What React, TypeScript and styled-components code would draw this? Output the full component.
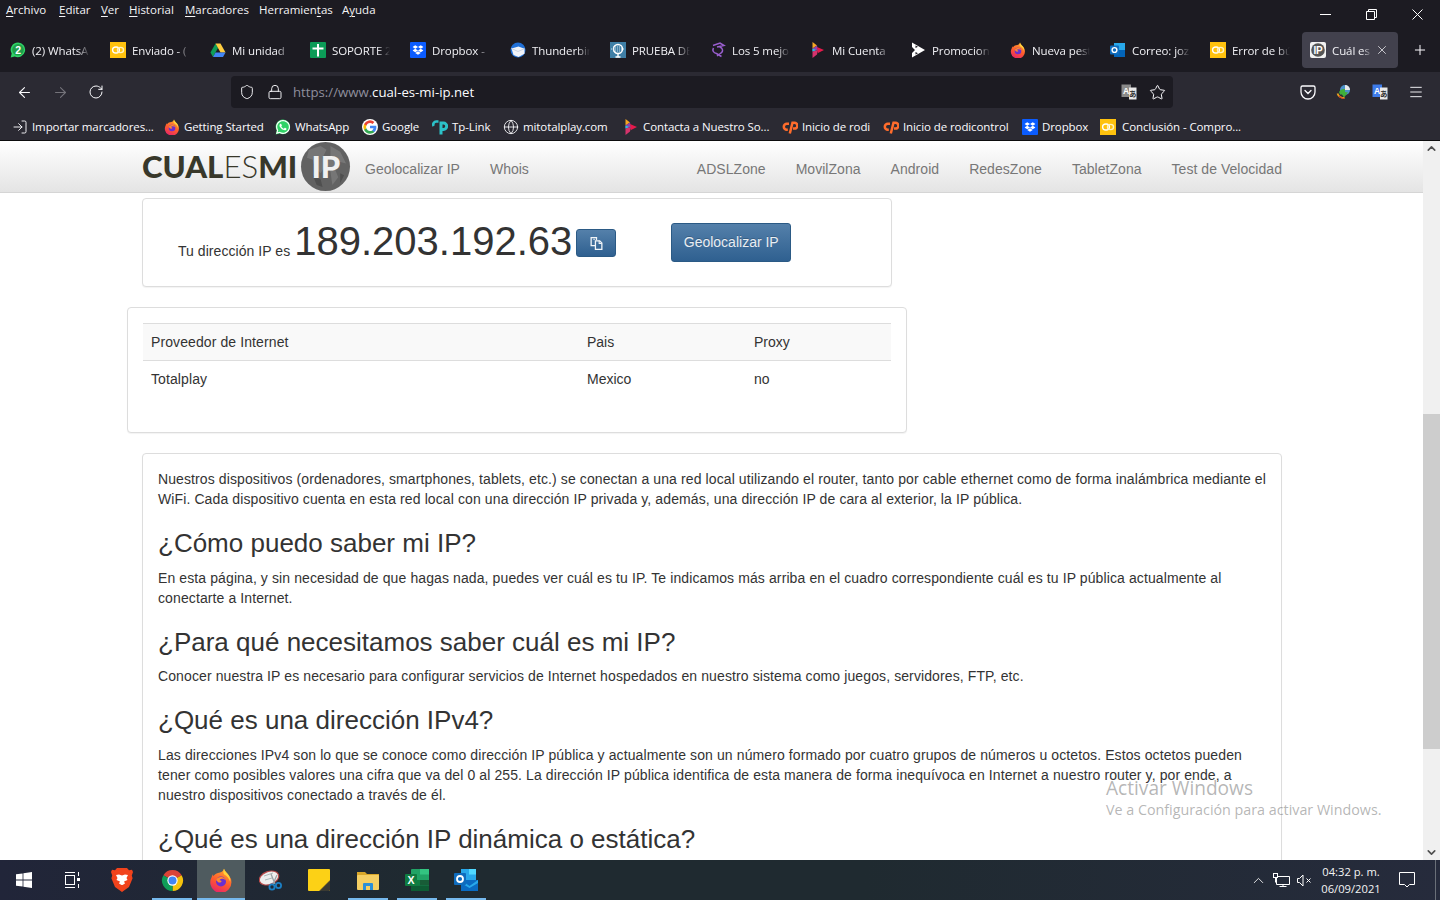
import React from "react";
import styled, { createGlobalStyle } from "styled-components";
import { ArrowLeft, ArrowRight, RotateCw, Shield, Lock, Star, Menu as MenuIcon, Plus, X, Globe, LogIn, ChevronUp, ChevronDown } from "lucide-react";
import { FaDropbox, FaWhatsapp } from "react-icons/fa";

const Global = createGlobalStyle`
  html, body { margin: 0; padding: 0; background: #fff; overflow: hidden; }
  * { box-sizing: border-box; }
`;

const UI = `"Open Sans", "Noto Sans", sans-serif`;
const PAGE = `"Liberation Sans", Arial, sans-serif`;

const Screen = styled.div`
  position: relative; width: 1440px; height: 900px; overflow: hidden;
  display: flex; flex-direction: column; font-family: ${PAGE};
`;
const TitleArea = styled.header`
  height: 72px; background: #1c1b22; color: #fbfbfe; font-family: ${UI}; flex: none;
  display: flex; flex-direction: column;
`;
const TopRow = styled.div`
  height: 32px; display: flex; justify-content: space-between; align-items: flex-start;
`;
const MenuBar = styled.nav`
  display: flex; gap: 12px; padding: 1px 0 0 6px; font-size: 11.5px; line-height: 18px; color: #f4f4f6;
`;
const MenuItem = styled.span<{ $w: number }>`
  width: ${(p) => p.$w}px; white-space: nowrap; u { text-decoration-thickness: 1px; text-underline-offset: 2px; }
`;
const WinControls = styled.div`
  display: flex; color: #fff;
`;
const WinBtn = styled.div`
  width: 46px; height: 29px; display: flex; align-items: center; justify-content: center;
`;
const TabStrip = styled.div`
  height: 36px; display: flex; align-items: stretch;
`;
const Tab = styled.div<{ $active?: boolean }>`
  position: relative; width: 100px; display: flex; align-items: center; gap: 6px; padding-left: 10px;
  font-size: 11.5px; letter-spacing: -0.1px; color: #f0f0f4;
  &::before {
    content: ""; display: ${(p) => (p.$active ? "block" : "none")}; position: absolute; inset: 0 2px; border-radius: 4px; background: #42414d;
  }
  & > * { position: relative; }
`;
const TabLabel = styled.span<{ $active?: boolean }>`
  width: ${(p) => (p.$active ? 40 : 58)}px; overflow: hidden; white-space: nowrap;
  -webkit-mask-image: linear-gradient(90deg, #000 78%, transparent 100%);
  mask-image: linear-gradient(90deg, #000 78%, transparent 100%);
`;
const TabClose = styled.span`
  position: absolute; left: 75px; top: 11px; display: flex;
`;
const NewTab = styled.div`
  width: 36px; display: flex; align-items: center; justify-content: center; margin-left: 2px;
`;
const NavBar = styled.div`
  height: 40px; flex: none; background: #2b2a33; display: flex; align-items: center; color: #fbfbfe; font-family: ${UI};
`;
const NavBtn = styled.div<{ $off?: boolean }>`
  width: 36px; display: flex; justify-content: center; color: ${(p) => (p.$off ? "#74737a" : "#fbfbfe")};
`;
const NavBtns = styled.div`
  display: flex; padding-left: 6px; width: 231px;
`;
const UrlBar = styled.div`
  width: 942px; height: 32px; background: #1c1b22; border-radius: 4px; display: flex; align-items: center; padding-left: 2px; color: #fbfbfe;
`;
const UrlIcon = styled.span`
  width: 28px; display: flex; justify-content: center; flex: none;
`;
const UrlText = styled.span`
  flex: 1; font-size: 13.2px; margin-left: 4px; color: #fbfbfe; white-space: nowrap;
  em { font-style: normal; color: #8f8f9d; }
`;
const UrlTail = styled.div`
  display: flex; padding-right: 2px;
`;
const Extensions = styled.div`
  display: flex; margin-left: 117px;
`;
const BookmarkBar = styled.div`
  height: 29px; flex: none; background: #2b2a33; border-bottom: 1px solid #0c0c0d; display: flex; align-items: center; gap: 12px;
  padding: 1px 0 0 12px; color: #fbfbfe; font-family: ${UI}; font-size: 11.5px; letter-spacing: -0.1px;
`;
const Bookmark = styled.div<{ $gap?: number }>`
  display: flex; align-items: center; gap: ${(p) => p.$gap ?? 4}px; flex: none;
`;
const BookmarkLabel = styled.span<{ $w: number }>`
  width: ${(p) => p.$w}px; white-space: nowrap;
`;
const Viewport = styled.div`
  flex: 1; display: flex; min-height: 0; overflow: hidden; background: #fff;
`;
const PageCol = styled.main`
  width: 1423px; flex: none; overflow: hidden; color: #333; font-size: 14px; line-height: 20px;
`;
const SiteNav = styled.div`
  height: 52px; padding: 0 141px 0 142px; display: flex; align-items: center;
  background: linear-gradient(#ffffff, #e4e4e4); border-bottom: 1px solid #d5d5d5;
`;
const Logo = styled.div`
  display: flex; align-items: center; width: 223px; flex: none; color: #38382a;
  font-family: "Lato", "Open Sans", sans-serif; font-size: 31.2px; line-height: 1; white-space: nowrap;
  b { font-weight: 900; } span.l { font-weight: 300; }
`;
const LogoBall = styled.div`
  position: relative; width: 49px; height: 49px; border-radius: 50%; margin-left: 4px; flex: none; overflow: hidden;
  background: #626262; display: flex; align-items: center; justify-content: center;
  svg { position: absolute; inset: 0; }
  strong { position: relative; color: #f0f0f0; font-family: "Lato", sans-serif; font-weight: 900; font-size: 31px; letter-spacing: 0; }
`;
const NavLinks = styled.div`
  display: flex; gap: 30px; color: #777; font-size: 14px; padding-top: 4px;
`;
const NavRight = styled(NavLinks)`
  margin-left: auto; letter-spacing: 0.04px;
`;
const Card = styled.section`
  background: #fff; border: 1px solid #ddd; border-radius: 4px; box-shadow: 0 1px 1px rgba(0, 0, 0, 0.05);
`;
const IpCard = styled(Card)`
  width: 750px; height: 89px; margin: 5px 0 20px 142px; display: flex; align-items: flex-start; padding: 24px 0 0 35px;
`;
const IpLabel = styled.span`
  margin-top: 18px; white-space: nowrap; letter-spacing: 0.05px;
`;
const IpValue = styled.span`
  font-size: 40px; line-height: 36px; margin: 0 4px 0 4px; white-space: nowrap;
`;
const BlueBtn = styled.button`
  border: 1px solid #2b5a85; border-radius: 3px; color: #e9eef3; font: 14px/20px ${PAGE};
  background: linear-gradient(#5480aa, #2f6090); padding: 0; display: flex; align-items: center; justify-content: center;
  text-shadow: 0 -1px 0 rgba(0,0,0,.2);
`;
const CopyBtn = styled(BlueBtn)`
  width: 40px; height: 28px; margin-top: 6px;
`;
const GeoBtn = styled(BlueBtn)`
  width: 120px; height: 39px; margin-left: 55px; padding-bottom: 2px;
`;
const TableCard = styled(Card)`
  width: 780px; height: 126px; margin: 0 0 20px 127px; padding: 15px;
`;
const InfoTable = styled.table`
  width: 748px; border-collapse: collapse; table-layout: fixed;
  th, td { padding: 8px; height: 37px; text-align: left; font-weight: 400; }
  th { background: #f9f9f9; border-top: 1px solid #ddd; border-bottom: 1px solid #ddd; }
  th:first-child, td:first-child { letter-spacing: 0.1px; }
`;
const ArticleCard = styled(Card)`
  width: 1140px; height: 700px; margin-left: 142px; padding: 15px;
  p { margin: 0 0 10px; letter-spacing: 0.105px; }
  h3 { margin: 20px 0 10px; font-size: 26px; line-height: 28.6px; font-weight: 400; }
`;
const Scrollbar = styled.aside`
  flex: 1; background: #f0f0f0; position: relative; color: #505050;
`;
const ScrollThumb = styled.div`
  position: absolute; left: 0; right: 0; top: 273px; height: 335px; background: #cdcdcd;
`;
const ScrollArrow = styled.span<{ $bottom?: boolean }>`
  position: absolute; left: 2px; ${(p) => (p.$bottom ? "bottom: 1px;" : "top: 1px;")} display: flex;
`;
const Taskbar = styled.footer`
  height: 40px; flex: none; display: flex; align-items: center; color: #fff; font-family: ${UI};
  background: linear-gradient(90deg, #212539 0%, #1f2a30 30%, #1f2a30 60%, #262b3c 100%);
`;
const TaskSlot = styled.div<{ $w?: number; $active?: boolean; $bar?: number; $ml?: number }>`
  position: relative; width: ${(p) => p.$w ?? 48}px; margin-left: ${(p) => p.$ml ?? 0}px; height: 40px; display: flex; align-items: center; justify-content: center; flex: none;
  background: ${(p) => (p.$active ? "#4f5b5f" : "transparent")};
  &::after {
    content: ""; display: ${(p) => (p.$bar ? "block" : "none")}; position: absolute; bottom: 0; height: 2px; background: #76b9ed;
    left: ${(p) => (p.$active ? 0 : 4)}px; right: ${(p) => (p.$active ? 0 : 4)}px;
  }
`;
const TaskIcons = styled.div`
  display: flex; flex: 1;
`;
const Tray = styled.div`
  display: flex; align-items: center; color: #fff;
`;
const TrayIcon = styled.span<{ $w: number }>`
  width: ${(p) => p.$w}px; display: flex; justify-content: center;
`;
const Clock = styled.div`
  width: 70px; text-align: center; font-size: 11.2px; line-height: 17px; margin: 0 9px 0 0; white-space: nowrap; color: #f4f4f4;
`;
const DesktopEdge = styled.div`
  width: 1px; height: 40px; background: #6a6f78; margin: 0 4px 0 16px;
`;
const Watermark = styled.div`
  position: absolute; left: 1106px; top: 775px; color: rgba(120, 120, 120, 0.55); font-family: ${UI}; pointer-events: none; white-space: nowrap;
  div:first-child { font-size: 19.1px; line-height: 26px; }
  div:last-child { font-size: 14.3px; line-height: 20px; margin-top: -1px; }
`;

type Kind = "wa" | "gold" | "drive" | "sop" | "dbx" | "tb" | "mic" | "mag" | "play" | "playw" | "ff" | "ol" | "ip" | "g" | "tp" | "cp" | "chrome";

const Ffox = ({ s }: { s: number }) => (
  <svg width={s} height={s} viewBox="0 0 24 24">
    <defs>
      <linearGradient id="ffg" x1="0.7" y1="0" x2="0.3" y2="1">
        <stop offset="0" stopColor="#ffa52e" />
        <stop offset="0.55" stopColor="#ff5a2d" />
        <stop offset="1" stopColor="#e6246b" />
      </linearGradient>
    </defs>
    <path d="M15 .8c.6 2.8 3 4 4.7 6.4A10.6 10.6 0 1 1 2.6 9.2c.4-1.3.9-2.2 1.4-2.9l.3 2c1-1.6 2.6-2.9 4.7-3.3C11.8 4.500 14.500 3.500 15 .8z" fill="url(#ffg)" />
    <path d="M15 .8c.6 2.8 3 4 4.700 6.400 1.300 2 1.800 4.200 1.500 6.500-1-3.300-3.200-5.600-6-7.200-1-.7-1.200-3.500-.2-5.700z" fill="#ffd23c" />
    <circle cx="12" cy="13.500" r="5" fill="#6a2fd0" />
    <path d="M7 12c1-2.500 3.500-3.500 6-3 1.800.4 3.500 1.600 4 3.500-1.500-1.500-3.500-2-5-1.500-1 .3-1.500 1-1.300 1.300.8.200 2 .3 1.800 1.200-.3 1.200-2.600 1.500-3.500.5z" fill="#ff8a2b" />
  </svg>
);

const Chrome = ({ s }: { s: number }) => (
  <svg width={s} height={s} viewBox="0 0 24 24">
    <path d="M12 12 21.530 6.500A11 11 0 0 0 2.470 6.500Z" fill="#db4437" />
    <path d="M12 12 12 23A11 11 0 0 0 21.530 6.500Z" fill="#f4c20d" />
    <path d="M12 12 2.470 6.500A11 11 0 0 0 12 23Z" fill="#0f9d58" />
    <circle cx="12" cy="12" r="5.400" fill="#fff" />
    <circle cx="12" cy="12" r="4.200" fill="#4285f4" />
  </svg>
);

const Fav = ({ k, s = 16 }: { k: Kind; s?: number }) => {
  switch (k) {
    case "wa":
      return (
        <svg width={s} height={s} viewBox="0 0 16 16">
          <path d="M8 .5a7.300 7.300 0 0 0-6.300 11L.7 15.500l4-1.100A7.300 7.300 0 1 0 8 .5z" fill="#2fd366" />
          <circle cx="8" cy="7.800" r="5.800" fill="#1f9e4a" />
          <text x="8" y="11.500" fontSize="10.500" fontWeight="700" fontFamily="Liberation Sans" fill="#fff" textAnchor="middle">2</text>
        </svg>
      );
    case "gold":
      return (
        <svg width={s} height={s} viewBox="0 0 16 16">
          <rect width="16" height="16" fill="#ffc20e" />
          <ellipse cx="6" cy="8" rx="3.400" ry="3" fill="none" stroke="#fff" strokeWidth="1.400" />
          <ellipse cx="10.500" cy="8" rx="3" ry="2.600" fill="none" stroke="#fff3c0" strokeWidth="1.400" />
        </svg>
      );
    case "drive":
      return (
        <svg width={s} height={s} viewBox="0 0 16 16">
          <path d="M5.500 1.500.5 10.500 3 15l5-9z" fill="#0f9d58" />
          <path d="M5.500 1.500h5l5 9h-5z" fill="#ffcd40" />
          <path d="M3 15h10l2.500-4.500h-10z" fill="#4285f4" />
        </svg>
      );
    case "sop":
      return (
        <svg width={s} height={s} viewBox="0 0 16 16">
          <rect width="16" height="16" rx="1" fill="#0c9b57" />
          <path d="M7 2h2v3.500h4.500v2H9V14.500H7V7.500H2.500v-2H7z" fill="#fff" />
        </svg>
      );
    case "dbx":
      return (
        <svg width={s} height={s} viewBox="0 0 16 16">
          <rect width="16" height="16" rx="1" fill="#0b5cff" />
          <FaDropbox x="2.500" y="2.500" size="11" color="#fff" />
        </svg>
      );
    case "tb":
      return (
        <svg width={s} height={s} viewBox="0 0 16 16">
          <circle cx="8" cy="8" r="7.500" fill="#1f6fd6" />
          <path d="M1.500 6.500 8.500 4.500l6 2.200v5L8.500 15l-5-2z" fill="#f1f3f8" />
          <path d="M1.500 6.500 8 9.500l6.500-2.800" fill="none" stroke="#c9d3e2" />
        </svg>
      );
    case "mic":
      return (
        <svg width={s} height={s} viewBox="0 0 16 16">
          <rect width="16" height="16" fill="#3f7fa6" />
          <circle cx="8" cy="7" r="4.500" fill="none" stroke="#fff" strokeWidth="1.500" />
          <path d="M1 7h14M3 5h10M3 9h10" stroke="#dbe9f2" strokeWidth=".9" strokeDasharray="1 1" />
          <path d="M8 11.500V15M5.500 15h5" stroke="#fff" strokeWidth="1.400" />
        </svg>
      );
    case "mag":
      return (
        <svg width={s} height={s} viewBox="0 0 16 16" fill="none" stroke="#9a5fd0" strokeWidth="1.500">
          <path d="M3 3.500 10 1l4 2.500-7 1.500M10 5c3 1.500 3.500 4.500 1 6l-4 3M3.500 6c-1.500 2.500 0 5 3 5.500l5 3" />
        </svg>
      );
    case "play":
      return (
        <svg width={s} height={s} viewBox="0 0 16 16">
          <path d="M2.500 0 7 3.500 2.500 6.500z" fill="#f6a623" />
          <path d="M2.500 6.500 7 3.500 8 8 2.500 9.500z" fill="#8e44ad" />
          <path d="M7 5 14 8 8 11z" fill="#e6194b" />
          <path d="M2.500 9.500 8 8 7 12.500 2.500 16z" fill="#d6336c" />
          <path d="M2.500 6.500 6 8 2.500 9.500z" fill="#1ec8e6" />
        </svg>
      );
    case "playw":
      return (
        <svg width={s} height={s} viewBox="0 0 16 16">
          <path d="M2 .5 15 8 2 15.500V11l3-3-3-3z" fill="#fff" />
          <path d="M6 6.500 9 8l-3 1.500z" fill="#fff" />
          <path d="M5.500 3.500v2.600l2.500-1.300zM5.500 9.900v2.600l2.500-1.300z" fill="#1c1b22" />
        </svg>
      );
    case "ff":
      return <Ffox s={s} />;
    case "chrome":
      return <Chrome s={s} />;
    case "ol":
      return (
        <svg width={s} height={s} viewBox="0 0 16 16">
          <rect x="4" y="1" width="11" height="14" fill="#28a8ea" />
          <rect x="4" y="8" width="11" height="7" fill="#0364b8" />
          <rect x="0" y="3.500" width="9" height="9" rx="1" fill="#0f6cbd" />
          <circle cx="4.500" cy="8" r="2.400" fill="none" stroke="#fff" strokeWidth="1.400" />
        </svg>
      );
    case "ip":
      return (
        <svg width={s} height={s} viewBox="0 0 16 16">
          <rect width="16" height="16" rx="2" fill="#f2f2f2" />
          <circle cx="8" cy="8" r="6.800" fill="#555" />
          <text x="8" y="11.700" fontSize="10" fontWeight="700" fontFamily="Liberation Sans" fill="#fff" textAnchor="middle">IP</text>
        </svg>
      );
    case "g":
      return (
        <svg width={s} height={s} viewBox="0 0 24 24">
          <circle cx="12" cy="12" r="12" fill="#fff" />
          <path d="M21.560 12.250c0-.700-.060-1.350-.180-2H12v3.800h5.350c-.230 1.230-.930 2.270-1.980 2.970v2.480h3.200c1.870-1.720 2.990-4.260 2.990-7.250z" fill="#4285f4" />
          <path d="M12 22c2.680 0 4.930-.890 6.570-2.400l-3.200-2.480c-.890.600-2.020.950-3.370.950-2.590 0-4.780-1.750-5.560-4.100H3.130v2.560A9.990 9.990 0 0 0 12 22z" fill="#34a853" />
          <path d="M6.440 13.970a6 6 0 0 1 0-3.940V7.470H3.130a10 10 0 0 0 0 9.060z" fill="#fbbc05" />
          <path d="M12 5.980c1.460 0 2.770.500 3.800 1.490l2.840-2.840A9.960 9.960 0 0 0 3.130 7.470l3.310 2.560C7.220 7.730 9.410 5.980 12 5.980z" fill="#ea4335" />
        </svg>
      );
    case "tp":
      return (
        <svg width={s} height={s} viewBox="0 0 16 16" fill="none" stroke="#2cc2c9" strokeWidth="3">
          <path d="M9 15.500V4h2.500a3.200 3.200 0 0 1 0 6.400H9" />
          <path d="M6.500 2.500H4.500a3 3 0 0 0-2.800 4.500" strokeWidth="2.600" />
        </svg>
      );
    case "cp":
      return (
        <svg width={s} height={s} viewBox="0 0 16 16" fill="none" stroke="#ff6c2c" strokeWidth="2.500">
          <path d="M7 4.800H4.800a3 3 0 0 0 0 6h1" />
          <path d="M7.800 14.500 10.500 3.800h2a2.800 2.800 0 0 1 0 5.800H11" />
        </svg>
      );
  }
};

const TranslateIcon = ({ mono }: { mono?: boolean }) => (
  <svg width="16" height="16" viewBox="0 0 16 16">
    <rect x="0.500" y="0.500" width="9.500" height="12.500" fill={mono ? "#8a8a8a" : "#3d7bea"} />
    <text x="5" y="10" fontSize="8.500" fontWeight="700" fontFamily="Liberation Sans" fill="#fff" textAnchor="middle">A</text>
    <rect x="8" y="3.500" width="7.500" height="12" fill="#e8e8e8" />
    <text x="11.800" y="12.500" fontSize="7.500" fontWeight="700" fontFamily="Noto Sans CJK JP" fill="#333" textAnchor="middle">あ</text>
  </svg>
);

const PocketIcon = () => (
  <svg width="16" height="16" viewBox="0 0 16 16" fill="none" stroke="#fbfbfe" strokeWidth="1.300">
    <path d="M2.500 2h11A1.500 1.500 0 0 1 15 3.500V8A7 7 0 0 1 1 8V3.500A1.500 1.500 0 0 1 2.500 2z" />
    <path d="M5 6.500 8 9.500l3-3" strokeLinecap="round" />
  </svg>
);

const IdmIcon = () => (
  <svg width="16" height="16" viewBox="0 0 16 16">
    <circle cx="9" cy="6" r="5" fill="#4a90c8" />
    <path d="M9 1a5 5 0 0 1 5 5H9z" fill="#e8e8e8" />
    <path d="M3 8a6 6 0 0 1 6-3v3l3 .500-4 5-2-3H4z" fill="#3fae3a" />
    <path d="M1.500 9.500c1 3 3.500 4.500 7 4.500" stroke="#e8a21c" strokeWidth="1.800" fill="none" />
    <path d="M3 12c1 1.500 3 2.500 5 2.500" stroke="#d3342a" strokeWidth="1.200" fill="none" />
  </svg>
);

const WinLogo = () => (
  <svg width="16" height="16" viewBox="0 0 16 16">
    <path d="M0 2.300 6.600 1.400v6.200H0zM7.400 1.300 16 0v7.600H7.400zM0 8.400h6.600v6.200L0 13.700zM7.400 8.400H16V16l-8.600-1.300z" fill="#fff" />
  </svg>
);
const TaskView = () => (
  <svg width="17" height="16" viewBox="0 0 17 16" fill="none" stroke="#fff" strokeWidth="1">
    <path d="M1 .500h10M1 15.500h10" />
    <rect x="1.500" y="3.500" width="9" height="9" />
    <path d="M14.500 0v4M14.500 12v4" />
    <rect x="13" y="6" width="3" height="3" fill="#fff" stroke="none" />
  </svg>
);
const Brave = () => (
  <svg width="22" height="24" viewBox="0 0 22 24">
    <path d="M6 0h10l2 2.300 3-.600 1 2.300-1.200 3.500.8 2.800L18 19l-7 5-7-5L.4 10.300l.8-2.800L0 4l1-2.300 3 .600z" fill="#f1431c" />
    <path d="M5 7l3-.500 3 1 3-1 3 .500-1.500 3 1 2-3.500 1.500 1 2-2.500 1.500h-1L8 15.500l1-2L5.500 12l1-2z" fill="#fff" />
  </svg>
);
const Snip = () => (
  <svg width="24" height="24" viewBox="0 0 24 24">
    <ellipse cx="10" cy="10" rx="10" ry="6.500" fill="#eee" stroke="#b94a4a" strokeWidth="1.200" transform="rotate(-20 10 10)" />
    <path d="M5 8l9-3M6 12l7-2" stroke="#9aa" strokeWidth=".8" />
    <path d="M12 6l4 10M18 7l-4 9" stroke="#9aa3a8" strokeWidth="1.300" />
    <circle cx="13" cy="19" r="2.600" fill="none" stroke="#1b7fc4" strokeWidth="1.800" />
    <circle cx="19.500" cy="17.500" r="2.600" fill="none" stroke="#1b7fc4" strokeWidth="1.800" />
  </svg>
);
const Sticky = () => (
  <svg width="22" height="22" viewBox="0 0 22 22">
    <rect width="22" height="22" rx="1" fill="#fcd116" />
    <path d="M22 11v10a1 1 0 0 1-1 1H11z" fill="#3a3a33" />
    <path d="M22 11v.5L11.500 22H11z" fill="#e8b90c" />
  </svg>
);
const Folder = () => (
  <svg width="22" height="20" viewBox="0 0 22 20">
    <path d="M0 2h8l2 2h12v3H0z" fill="#d9a72a" />
    <rect y="5" width="22" height="15" rx="1" fill="#f5cf63" />
    <path d="M6 20v-6a1 1 0 0 1 1-1h8a1 1 0 0 1 1 1v6h-3v-4H9v4z" fill="#2a8fd8" />
  </svg>
);
const Excel = () => (
  <svg width="24" height="22" viewBox="0 0 24 22">
    <rect x="6" width="18" height="22" rx="1" fill="#21a366" />
    <rect x="15" width="9" height="5.500" fill="#33c481" />
    <rect x="6" y="11" width="9" height="5.500" fill="#107c41" />
    <rect x="15" y="11" width="9" height="5.500" fill="#185c37" />
    <rect x="6" y="16.500" width="18" height="5.500" fill="#0e5c34" />
    <rect x="0" y="5" width="12" height="12" rx="1" fill="#107c41" />
    <text x="6" y="15" fontSize="10.500" fontWeight="700" fontFamily="Liberation Sans" fill="#fff" textAnchor="middle">X</text>
  </svg>
);
const Outlook = () => (
  <svg width="24" height="22" viewBox="0 0 24 22">
    <rect x="7" width="15" height="11" fill="#28a8ea" />
    <rect x="15" width="7" height="5.500" fill="#50d9ff" />
    <path d="M7 11h17v11H7z" fill="#0a6bc2" />
    <path d="M7 11l8.500 6 8.500-6v3l-8.500 5L7 14z" fill="#28a8ea" />
    <rect y="4" width="12" height="12" rx="1" fill="#0f6cbd" />
    <circle cx="6" cy="10" r="3" fill="none" stroke="#fff" strokeWidth="1.800" />
  </svg>
);
const Network = () => (
  <svg width="17" height="14" viewBox="0 0 17 14" fill="none" stroke="#fff" strokeWidth="1">
    <path d="M3.500 3.500h13v8h-13zM10 11.500v2M6.500 13.500h7" />
    <rect x=".5" y=".5" width="4" height="4" fill="#262b3c" />
    <path d="M2.500 4.500v5" />
  </svg>
);
const Speaker = () => (
  <svg width="15" height="13" viewBox="0 0 15 13" fill="none" stroke="#fff" strokeWidth="1">
    <path d="M.5 4.500h2L6 1v11L2.500 8.500h-2zM9.500 4.500l4 4M13.500 4.500l-4 4" />
  </svg>
);
const Notif = () => (
  <svg width="16" height="16" viewBox="0 0 16 16" fill="none" stroke="#fff" strokeWidth="1">
    <path d="M.5 .5h15v12h-5L8 15l-2.500-2.500h-5z" />
  </svg>
);
const CopyGlyph = () => (
  <svg width="15" height="15" viewBox="0 0 14 14" fill="none" stroke="#f2f5f8" strokeWidth="1.200">
    <path d="M6 9H2V1.500h5V4" />
    <path d="M6 4.500h4l2 2v6H6z" />
    <path d="M4 3h1.500M9.500 4.500v2.500H12" strokeWidth="1" />
  </svg>
);
const LogoMap = () => (
  <svg width="49" height="49" viewBox="0 0 50 50">
    <path d="M8 8l12-4 6 4-4 8 4 6-6 10-6-6-2-8-6-2zM30 4l10 6 6 12-8-2-4 6 4 10-6 8-2-14-4-8 4-8z" fill="#767676" />
    <path d="M12 34l8 4 2 8-6-2zM40 32l4 2-4 8z" fill="#4f4f4f" />
  </svg>
);

const TABS: [Kind, string][] = [
  ["wa", "(2) WhatsA"], ["gold", "Enviado - ("], ["drive", "Mi unidad"], ["sop", "SOPORTE 2"], ["dbx", "Dropbox -"],
  ["tb", "Thunderbir"], ["mic", "PRUEBA DE"], ["mag", "Los 5 mejo"], ["play", "Mi Cuenta"], ["playw", "Promocion"],
  ["ff", "Nueva pest"], ["ol", "Correo: joz"], ["gold", "Error de bú"],
];

const BOOKMARKS: [Kind | "import" | "globe", string, number, number?][] = [
  ["import", "Importar marcadores...", 120], ["ff", "Getting Started", 79], ["wa", "WhatsApp", 55], ["g", "Google", 38],
  ["tp", "Tp-Link", 39], ["globe", "mitotalplay.com", 88], ["play", "Contacta a Nuestro So...", 127], ["cp", "Inicio de rodi", 69],
  ["cp", "Inicio de rodicontrol", 107], ["dbx", "Dropbox", 46], ["gold", "Conclusión - Compro...", 124, 6],
];

const BmIcon = ({ k }: { k: Kind | "import" | "globe" }) => {
  if (k === "import") return <LogIn size={16} strokeWidth={1.4} />;
  if (k === "globe") return <Globe size={16} strokeWidth={1.3} />;
  if (k === "wa")
    return (
      <svg width="16" height="16" viewBox="0 0 16 16">
        <path d="M8 .5a7.300 7.300 0 0 0-6.300 11L.7 15.500l4-1.100A7.300 7.300 0 1 0 8 .5z" fill="#2fd366" />
        <FaWhatsapp x="0" y="0" size="16" color="#fff" />
      </svg>
    );
  return <Fav k={k} />;
};

export default function App() {
  return (
    <Screen>
      <Global />
      <TitleArea>
        <TopRow>
          <MenuBar>
            <MenuItem $w={41}><u>A</u>rchivo</MenuItem>
            <MenuItem $w={30}><u>E</u>ditar</MenuItem>
            <MenuItem $w={16}><u>V</u>er</MenuItem>
            <MenuItem $w={44}><u>H</u>istorial</MenuItem>
            <MenuItem $w={62}><u>M</u>arcadores</MenuItem>
            <MenuItem $w={71}>Herramien<u>t</u>as</MenuItem>
            <MenuItem $w={34}>A<u>y</u>uda</MenuItem>
          </MenuBar>
          <WinControls>
            <WinBtn>
              <svg width="11" height="1" viewBox="0 0 11 1"><rect width="11" height="1" fill="#fff" /></svg>
            </WinBtn>
            <WinBtn>
              <svg width="11" height="11" viewBox="0 0 11 11" fill="none" stroke="#fff">
                <path d="M.5 2.500h8v8h-8zM2.500 2.500v-2h8v8h-2" />
              </svg>
            </WinBtn>
            <WinBtn>
              <svg width="11" height="11" viewBox="0 0 11 11" fill="none" stroke="#fff">
                <path d="M.5 .5l10 10M10.500 .5l-10 10" />
              </svg>
            </WinBtn>
          </WinControls>
        </TopRow>
        <TabStrip>
          {TABS.map(([k, t], i) => (
            <Tab key={i}>
              <Fav k={k} />
              <TabLabel>{t}</TabLabel>
            </Tab>
          ))}
          <Tab $active>
            <Fav k="ip" />
            <TabLabel $active>Cuál es r</TabLabel>
            <TabClose><X size={14} strokeWidth={1.3} /></TabClose>
          </Tab>
          <NewTab><Plus size={16} strokeWidth={1.5} /></NewTab>
        </TabStrip>
      </TitleArea>
      <NavBar>
        <NavBtns>
          <NavBtn><ArrowLeft size={17} strokeWidth={1.5} /></NavBtn>
          <NavBtn $off><ArrowRight size={17} strokeWidth={1.5} /></NavBtn>
          <NavBtn><RotateCw size={16} strokeWidth={1.5} /></NavBtn>
        </NavBtns>
        <UrlBar>
          <UrlIcon><Shield size={16} strokeWidth={1.4} /></UrlIcon>
          <UrlIcon><Lock size={16} strokeWidth={1.4} /></UrlIcon>
          <UrlText><em>https://www.</em>cual-es-mi-ip.net</UrlText>
          <UrlTail>
            <UrlIcon><TranslateIcon mono /></UrlIcon>
            <UrlIcon><Star size={17} strokeWidth={1.4} /></UrlIcon>
          </UrlTail>
        </UrlBar>
        <Extensions>
          <NavBtn><PocketIcon /></NavBtn>
          <NavBtn><IdmIcon /></NavBtn>
          <NavBtn><TranslateIcon /></NavBtn>
          <NavBtn><MenuIcon size={16} strokeWidth={1.4} /></NavBtn>
        </Extensions>
      </NavBar>
      <BookmarkBar>
        {BOOKMARKS.map(([k, t, w, g], i) => (
          <Bookmark key={i} $gap={g}>
            <BmIcon k={k} />
            <BookmarkLabel $w={w}>{t}</BookmarkLabel>
          </Bookmark>
        ))}
      </BookmarkBar>
      <Viewport>
        <PageCol>
          <SiteNav>
            <Logo>
              <b>CUAL</b><span className="l">ES</span><b>MI</b>
              <LogoBall><LogoMap /><strong>IP</strong></LogoBall>
            </Logo>
            <NavLinks><span>Geolocalizar IP</span><span>Whois</span></NavLinks>
            <NavRight>
              <span>ADSLZone</span><span>MovilZona</span><span>Android</span><span>RedesZone</span><span>TabletZona</span><span>Test de Velocidad</span>
            </NavRight>
          </SiteNav>
          <IpCard>
            <IpLabel>Tu dirección IP es</IpLabel>
            <IpValue>189.203.192.63</IpValue>
            <CopyBtn aria-label="Copiar"><CopyGlyph /></CopyBtn>
            <GeoBtn>Geolocalizar IP</GeoBtn>
          </IpCard>
          <TableCard>
            <InfoTable>
              <colgroup><col width="436" /><col width="167" /><col width="145" /></colgroup>
              <thead><tr><th>Proveedor de Internet</th><th>Pais</th><th>Proxy</th></tr></thead>
              <tbody><tr><td>Totalplay</td><td>Mexico</td><td>no</td></tr></tbody>
            </InfoTable>
          </TableCard>
          <ArticleCard>
            <p>Nuestros dispositivos (ordenadores, smartphones, tablets, etc.) se conectan a una red local utilizando el router, tanto por cable ethernet como de forma inalámbrica mediante el WiFi. Cada dispositivo cuenta en esta red local con una dirección IP privada y, además, una dirección IP de cara al exterior, la IP pública.</p>
            <h3>¿Cómo puedo saber mi IP?</h3>
            <p>En esta página, y sin necesidad de que hagas nada, puedes ver cuál es tu IP. Te indicamos más arriba en el cuadro correspondiente cuál es tu IP pública actualmente al conectarte a Internet.</p>
            <h3>¿Para qué necesitamos saber cuál es mi IP?</h3>
            <p>Conocer nuestra IP es necesario para configurar servicios de Internet hospedados en nuestro sistema como juegos, servidores, FTP, etc.</p>
            <h3>¿Qué es una dirección IPv4?</h3>
            <p>Las direcciones IPv4 son lo que se conoce como dirección IP pública y actualmente son un número formado por cuatro grupos de números u octetos. Estos octetos pueden tener como posibles valores una cifra que va del 0 al 255. La dirección IP pública identifica de esta manera de forma inequívoca en Internet a nuestro router y, por ende, a nuestro dispositivos conectado a través de él.</p>
            <h3>¿Qué es una dirección IP dinámica o estática?</h3>
          </ArticleCard>
        </PageCol>
        <Scrollbar>
          <ScrollArrow><ChevronUp size={13} strokeWidth={3} /></ScrollArrow>
          <ScrollThumb />
          <ScrollArrow $bottom><ChevronDown size={13} strokeWidth={3} /></ScrollArrow>
        </Scrollbar>
      </Viewport>
      <Taskbar>
        <TaskIcons>
          <TaskSlot><WinLogo /></TaskSlot>
          <TaskSlot><TaskView /></TaskSlot>
          <TaskSlot $w={52}><Brave /></TaskSlot>
          <TaskSlot $bar={1}><Chrome s={23} /></TaskSlot>
          <TaskSlot $active $bar={1} $ml={1}><Ffox s={24} /></TaskSlot>
          <TaskSlot $w={52}><Snip /></TaskSlot>
          <TaskSlot $w={44}><Sticky /></TaskSlot>
          <TaskSlot $bar={1} $ml={3}><Folder /></TaskSlot>
          <TaskSlot $bar={1} $ml={1}><Excel /></TaskSlot>
          <TaskSlot $bar={1} $ml={1}><Outlook /></TaskSlot>
        </TaskIcons>
        <Tray>
          <TrayIcon $w={24}><ChevronUp size={17} strokeWidth={1.2} /></TrayIcon>
          <TrayIcon $w={22}><Network /></TrayIcon>
          <TrayIcon $w={24}><Speaker /></TrayIcon>
          <Clock>04:32 p. m.<br />06/09/2021</Clock>
          <TrayIcon $w={24}><Notif /></TrayIcon>
          <DesktopEdge />
        </Tray>
      </Taskbar>
      <Watermark>
        <div>Activar Windows</div>
        <div>Ve a Configuración para activar Windows.</div>
      </Watermark>
    </Screen>
  );
}
